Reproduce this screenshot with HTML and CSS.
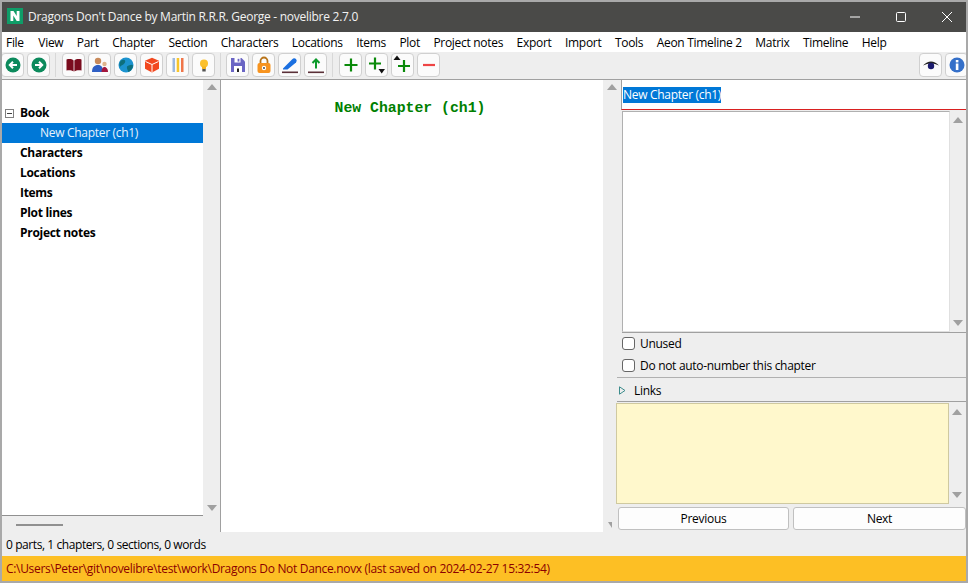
FILE: index.html
```html
<!DOCTYPE html>
<html lang="en">
<head>
    <meta charset="UTF-8">
    <meta name="viewport" content="width=device-width, initial-scale=1.0">
    <title>Dragons Don't Dance by Martin R.R.R. George - novelibre 2.7.0</title>
    <link rel="stylesheet" href="styles.css">
</head>
<body>
    <div class="window">
        <div class="title-bar">
            <svg class="app-icon" width="16" height="16" viewBox="0 0 16 16">
                <rect width="16" height="16" fill="#0f9d68"/>
                <path d="M3.5 13V3H6.5L9.7 8V3H12.5V13H9.7L6.3 7.6V13Z" fill="#fff"/>
            </svg>
            <span class="title-text">Dragons Don't Dance by Martin R.R.R. George - novelibre 2.7.0</span>
            <div class="win-controls">
                <svg width="12" height="12" viewBox="0 0 12 12"><path d="M1 6H11" stroke="#fff" fill="none"/></svg>
                <svg width="12" height="12" viewBox="0 0 12 12"><rect x="1.5" y="1.5" width="9" height="9" rx="1" stroke="#fff" fill="none"/></svg>
                <svg width="12" height="12" viewBox="0 0 12 12"><path d="M1 1L11 11M11 1L1 11" stroke="#fff" fill="none"/></svg>
            </div>
        </div>

        <div class="menu-bar">
            <span>File</span><span>View</span><span>Part</span><span>Chapter</span><span>Section</span><span>Characters</span><span>Locations</span><span>Items</span><span>Plot</span><span>Project notes</span><span>Export</span><span>Import</span><span>Tools</span><span>Aeon Timeline 2</span><span>Matrix</span><span>Timeline</span><span>Help</span>
        </div>

        <div class="tool-bar">
            <div class="tool-group">
                <button class="tool-btn"><svg width="16" height="16" viewBox="0 0 16 16"><circle cx="8" cy="8" r="7.5" fill="#0c8a5c"/><path d="M12 8H5M8 4.8L4.8 8L8 11.2" stroke="#fff" stroke-width="2" fill="none"/></svg></button>
                <button class="tool-btn"><svg width="16" height="16" viewBox="0 0 16 16"><circle cx="8" cy="8" r="7.5" fill="#0c8a5c"/><path d="M4 8H11M8 4.8L11.2 8L8 11.2" stroke="#fff" stroke-width="2" fill="none"/></svg></button>
            </div>
            <div class="tool-group">
                <button class="tool-btn"><svg width="16" height="16" viewBox="0 0 16 16"><path d="M0.5 2.5C3 1.8 6 2 7.6 3.5V14.5C6 13.2 3 13 0.5 13.5ZM15.5 2.5C13 1.8 10 2 8.4 3.5V14.5C10 13.2 13 13 15.5 13.5Z" fill="#7a0c1e"/></svg></button>
                <button class="tool-btn"><svg width="18" height="16" viewBox="0 0 18 16"><circle cx="7" cy="4" r="3.2" fill="#c98a5a"/><path d="M1 15C1 10 3.5 8 7 8S12 10 12 15Z" fill="#2f5fc4"/><circle cx="13.5" cy="7" r="2.2" fill="#e0b48c"/><path d="M10.5 15C10.5 11.5 12 10 13.5 10S17 11.5 17 15Z" fill="#a3163c"/></svg></button>
                <button class="tool-btn"><svg width="16" height="16" viewBox="0 0 16 16"><circle cx="8" cy="8" r="7.5" fill="#1c93cf"/><path d="M3 3.5C6 2 8 3 7 5.5S3 8 2 10C1 8 1.5 5 3 3.5ZM9 9.5C11 8 14.5 7 15 8.5C15 11 13 14 10.5 15C9.5 13 8.5 11 9 9.5Z" fill="#0d6f7c"/></svg></button>
                <button class="tool-btn"><svg width="16" height="16" viewBox="0 0 16 16"><path d="M8 0.8L15 3.8V11.8L8 15.4L1 11.8V3.8Z" fill="#f2481f"/><path d="M1.5 4.5L8 7.5L14.5 4.5M8 7.5V15" stroke="#fff" fill="none"/></svg></button>
                <button class="tool-btn"><svg width="16" height="16" viewBox="0 0 16 16"><rect x="2.5" y="1" width="2.5" height="14" fill="#9db9e0"/><rect x="6.7" y="1" width="2.5" height="14" fill="#f7c52b"/><rect x="11" y="1" width="2.5" height="14" fill="#f0764a"/></svg></button>
                <button class="tool-btn"><svg width="16" height="16" viewBox="0 0 16 16"><circle cx="8" cy="6.5" r="4" fill="#fbc02d"/><rect x="6" y="9.5" width="4" height="2.5" fill="#f3b322"/><rect x="6.3" y="12" width="3.4" height="2.5" fill="#555"/></svg></button>
            </div>
            <div class="tool-group">
                <button class="tool-btn"><svg width="16" height="16" viewBox="0 0 16 16"><path d="M1 1H11.5L15 4.5V15H1Z" fill="#6a65c4"/><rect x="4.5" y="1" width="6" height="4.5" fill="#fff"/><rect x="7.6" y="1.8" width="1.8" height="2.8" fill="#6a65c4"/><rect x="4" y="9" width="8" height="6" fill="#fff"/><rect x="7" y="11.5" width="2" height="3.5" fill="#222"/></svg></button>
                <button class="tool-btn"><svg width="16" height="18" viewBox="0 0 16 18"><path d="M4.5 8V5A3.5 3.5 0 0 1 11.5 5V8" stroke="#b8741a" stroke-width="1.8" fill="none"/><rect x="1.5" y="7" width="13" height="10" rx="2" fill="#f7931e"/><circle cx="8" cy="12" r="2.2" fill="#fff"/><circle cx="8" cy="12" r="0.9" fill="#333"/></svg></button>
                <button class="tool-btn"><svg width="18" height="17" viewBox="0 0 18 17"><path d="M2 11.5L11 2.5Q13 0.5 15 2Q16.5 3.5 15 5.5L6.5 12.5H2Z" fill="#1a6fe0"/><rect x="1" y="14.5" width="16" height="1.6" fill="#5a3038"/></svg></button>
                <button class="tool-btn"><svg width="18" height="17" viewBox="0 0 18 17"><path d="M9 11.5V3M5.5 6L9 2.5L12.5 6" stroke="#0b9a2a" stroke-width="2" fill="none"/><rect x="1" y="14.5" width="16" height="1.6" fill="#5a3038"/></svg></button>
            </div>
            <div class="tool-group">
                <button class="tool-btn"><svg width="14" height="14" viewBox="0 0 14 14"><path d="M7 0.5V13.5M0.5 7H13.5" stroke="#0a8a0a" stroke-width="2.2" fill="none"/></svg></button>
                <button class="tool-btn"><svg width="21" height="22" viewBox="0 0 21 22"><path d="M9 3.5V15.5M3 9.5H15" stroke="#0a8a0a" stroke-width="2.2" fill="none"/><path d="M12.5 15H19L15.7 19.5Z" fill="#111"/></svg></button>
                <button class="tool-btn"><svg width="21" height="22" viewBox="0 0 21 22"><path d="M12 6V18M6 12H18" stroke="#0a8a0a" stroke-width="2.2" fill="none"/><path d="M1.5 6H8.5L5 1.5Z" fill="#111"/></svg></button>
                <button class="tool-btn"><svg width="14" height="14" viewBox="0 0 14 14"><path d="M1 7H13" stroke="#ee4444" stroke-width="2.2" fill="none"/></svg></button>
            </div>
            <div class="tool-group tool-group-end">
                <button class="tool-btn"><svg width="18" height="12" viewBox="0 0 18 12"><path d="M1 6.5Q9 -1.5 17 6.5Q9 2.5 1 6.5Z" fill="#222"/><circle cx="9" cy="7" r="3.2" fill="#1b1b6e"/></svg></button>
                <button class="tool-btn"><svg width="16" height="16" viewBox="0 0 16 16"><circle cx="8" cy="8" r="7.5" fill="#3570c9"/><rect x="6.8" y="6.5" width="2.6" height="6.5" fill="#fff"/><rect x="6.8" y="3" width="2.6" height="2.4" fill="#fff"/></svg></button>
            </div>
        </div>

        <div class="main">
            <div class="left-pane">
                <div class="tree-row-wrap">
                    <div class="tree">
                        <div class="tree-item tree-top"><span class="tree-toggle"></span>Book</div>
                        <div class="tree-item tree-selected">New Chapter (ch1)</div>
                        <div class="tree-item tree-top">Characters</div>
                        <div class="tree-item tree-top">Locations</div>
                        <div class="tree-item tree-top">Items</div>
                        <div class="tree-item tree-top">Plot lines</div>
                        <div class="tree-item tree-top">Project notes</div>
                    </div>
                    <div class="scroll-col tree-scroll">
                        <span class="arrow-up"></span>
                        <span class="arrow-down"></span>
                    </div>
                </div>
                <div class="h-scroll"><span class="h-thumb"></span></div>
            </div>

            <div class="editor">
                <div class="chapter-heading">New Chapter (ch1)</div>
            </div>
            <div class="scroll-col editor-scroll">
                <span class="arrow-up"></span>
                <span class="arrow-down"></span>
            </div>

            <div class="right-pane">
                <div class="title-entry"><span class="selected-text">New Chapter (ch1)</span></div>
                <div class="desc-row">
                    <div class="desc-box"></div>
                    <div class="scroll-col text-scroll">
                        <span class="arrow-up"></span>
                        <span class="arrow-down"></span>
                    </div>
                </div>
                <div class="checks">
                    <label class="check-row"><input type="checkbox">Unused</label>
                    <label class="check-row"><input type="checkbox">Do not auto-number this chapter</label>
                </div>
                <div class="links-row">
                    <svg class="links-arrow" width="7" height="9" viewBox="0 0 7 9"><path d="M0.5 0.8L6 4.5L0.5 8.2Z" fill="none" stroke="#3c8c8c"/></svg>
                    Links
                </div>
                <div class="notes-row">
                    <div class="notes-box"></div>
                    <div class="scroll-col text-scroll">
                        <span class="arrow-up"></span>
                        <span class="arrow-down"></span>
                    </div>
                </div>
                <div class="nav-buttons">
                    <button class="nav-btn">Previous</button>
                    <button class="nav-btn">Next</button>
                </div>
            </div>
        </div>

        <div class="status-bar">0 parts, 1 chapters, 0 sections, 0 words</div>
        <div class="path-bar">C:\Users\Peter\git\novelibre\test\work\Dragons Do Not Dance.novx (last saved on 2024-02-27 15:32:54)</div>
    </div>
</body>
</html>
```

FILE: styles.css
```css
* {
    box-sizing: border-box;
}

body {
    margin: 0;
    height: 583px;
    overflow: hidden;
    font-family: 'Open Sans', 'Noto Sans', sans-serif;
    font-size: 12px;
    letter-spacing: -0.3px;
    color: #000;
}

.window {
    height: 583px;
    border: 2px solid #a9a9a9;
    background-color: #eeeeee;
    display: flex;
    flex-direction: column;
}

.title-bar {
    height: 30px;
    flex: none;
    background-color: #4a4a48;
    color: #f2f2f2;
    display: flex;
    align-items: center;
    padding: 0 0 1px 5px;
}

.app-icon {
    margin-right: 5px;
    margin-top: -1px;
}

.title-text {
    letter-spacing: -0.27px;
}

.win-controls {
    margin-left: auto;
    display: flex;
    gap: 34px;
    padding-right: 13px;
}

.menu-bar {
    height: 20px;
    flex: none;
    background-color: #fff;
    display: flex;
    align-items: center;
    gap: 13.5px;
    padding-left: 4px;
}

.menu-bar span:first-child {
    margin-right: 1px;
}

.tool-bar {
    height: 28px;
    flex: none;
    display: flex;
    align-items: flex-start;
    padding-top: 1px;
    border-bottom: 1px solid #a0a0a0;
    overflow: hidden;
}

.tool-group {
    display: flex;
    gap: 3px;
    padding-right: 5px;
    margin-right: 5px;
    border-right: 1px solid #d8d8d8;
    height: 24px;
}

.tool-group:first-child {
    margin-left: -1px;
    margin-right: 6px;
}

.tool-group:nth-child(3) {
    margin-right: 6px;
}

.tool-group:nth-child(4) {
    border-right: none;
    margin-right: 0;
}

.tool-group-end {
    margin-left: auto;
    margin-right: -2px;
    padding-right: 0;
    border-right: none;
}

.tool-btn {
    width: 23px;
    height: 24px;
    padding: 0;
    background-color: #fbfbfb;
    border: 1px solid #d0d0d0;
    border-radius: 4px;
    display: flex;
    align-items: center;
    justify-content: center;
}

.main {
    height: 452px;
    flex: none;
    display: flex;
}

.left-pane {
    width: 219px;
    flex: none;
    display: flex;
    flex-direction: column;
    border-right: 1px solid #a0a0a0;
}

.tree-row-wrap {
    height: 437px;
    display: flex;
}

.tree {
    width: 201px;
    height: 436px;
    background-color: #fff;
    border-bottom: 1px solid #909090;
    padding-top: 23px;
}

.tree-item {
    height: 20px;
    line-height: 20px;
    position: relative;
    white-space: nowrap;
}

.tree-top {
    font-weight: 700;
    padding-left: 18px;
}

.tree-selected {
    background-color: #0078d7;
    color: #e8f2fb;
    padding-left: 38px;
}

.tree-toggle {
    position: absolute;
    left: 3px;
    top: 6px;
    width: 9px;
    height: 9px;
    border: 1px solid #808080;
    background: linear-gradient(#404040, #404040) center / 5px 1px no-repeat;
}

.scroll-col {
    width: 16px;
    flex: none;
    display: flex;
    flex-direction: column;
    justify-content: space-between;
    align-items: center;
    padding: 4px 0;
}

.tree-scroll {
    width: 17px;
    padding-bottom: 6px;
}

.text-scroll {
    padding: 6px 0;
}

.arrow-up {
    width: 0;
    height: 0;
    border-left: 5px solid transparent;
    border-right: 5px solid transparent;
    border-bottom: 6px solid #a0a0a0;
}

.arrow-down {
    width: 0;
    height: 0;
    border-left: 5px solid transparent;
    border-right: 5px solid transparent;
    border-top: 6px solid #a0a0a0;
}

.h-scroll {
    height: 15px;
    padding: 7px 0 0 14px;
}

.h-thumb {
    display: block;
    width: 47px;
    height: 2px;
    background-color: #909090;
}

.editor {
    width: 382px;
    flex: none;
    background-color: #fff;
    padding-top: 19px;
    text-align: center;
}

.chapter-heading {
    font-family: 'Liberation Mono', monospace;
    font-size: 14.8px;
    font-weight: 700;
    letter-spacing: 0;
    color: #008000;
    line-height: 18px;
    padding-right: 4px;
}

.editor-scroll {
    width: 13px;
}

.editor-scroll .arrow-up {
    margin-left: 5px;
}

.editor-scroll .arrow-down {
    border-left-width: 4px;
    border-right-width: 0;
}

.right-pane {
    width: 350px;
    flex: none;
    display: flex;
    flex-direction: column;
}

.title-entry {
    height: 30px;
    margin-left: 5px;
    background-color: #fff;
    border-left: 1px solid #a0a0a0;
    border-bottom: 1px solid #d92020;
    padding: 7px 0 0 1px;
    line-height: 16px;
}

.selected-text {
    display: inline-block;
    height: 16px;
    background-color: #0078d7;
    color: #fff;
}

.desc-row {
    height: 222px;
    margin-top: 1px;
    margin-left: 6px;
    display: flex;
    border-bottom: 1px solid #a0a0a0;
}

.desc-box {
    width: 328px;
    background-color: #fff;
    border: 1px solid #b0b0b0;
    border-bottom-color: #e0e0e0;
    border-right-color: #e0e0e0;
}

.checks {
    height: 45px;
    margin-left: 1px;
    display: flex;
    flex-direction: column;
    border-bottom: 1px solid #b0b0b0;
}

.check-row {
    height: 21.5px;
    display: flex;
    align-items: center;
    padding-left: 5px;
}

.check-row input {
    appearance: none;
    width: 13px;
    height: 13px;
    margin: 0 5px 0 0;
    background-color: #fff;
    border: 1px solid #666;
    border-radius: 3px;
}

.links-row {
    height: 24px;
    margin-left: 1px;
    display: flex;
    align-items: center;
    padding: 1px 0 0 2px;
    border-bottom: 1px solid #a0a0a0;
}

.links-arrow {
    margin-right: 8px;
}

.notes-row {
    height: 102px;
    padding-top: 1px;
    display: flex;
}

.notes-box {
    width: 333px;
    background-color: #fff8cc;
    border: 1px solid #cfc9a0;
}

.nav-buttons {
    display: flex;
    gap: 4px;
    padding: 3px 0 0 2px;
}

.nav-btn {
    height: 23px;
    padding: 0;
    font-family: inherit;
    font-size: 12px;
    letter-spacing: -0.3px;
    color: #000;
    background-color: #fdfdfd;
    border: 1px solid #c0c0c0;
    border-radius: 3px;
}

.nav-btn:first-child {
    width: 171px;
}

.nav-btn:last-child {
    width: 173px;
}

.status-bar {
    height: 24px;
    flex: none;
    display: flex;
    align-items: center;
    padding: 1px 0 0 4px;
    letter-spacing: -0.42px;
}

.path-bar {
    flex: 1;
    background-color: #fdbf24;
    color: #8b0000;
    display: flex;
    align-items: center;
    padding-left: 4px;
    letter-spacing: -0.32px;
}
```
